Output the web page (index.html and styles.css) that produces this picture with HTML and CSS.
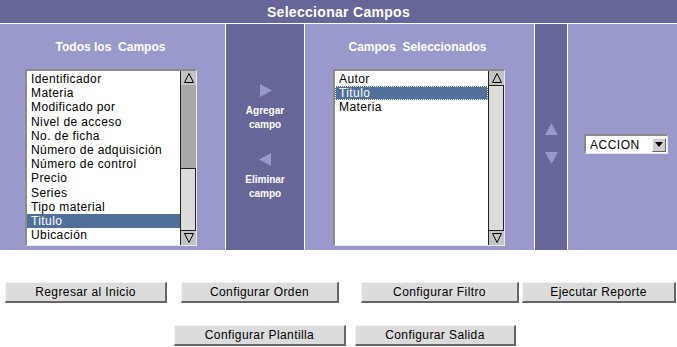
FILE: index.html
```html
<!DOCTYPE html>
<html>
<head>
<meta charset="utf-8">
<link rel="stylesheet" href="styles.css">
</head>
<body>
<div class="panel">
  <div class="title">Seleccionar Campos</div>

  <div class="col light col-all">
    <div class="heading">Todos los&nbsp; Campos</div>
    <div class="listbox lb-left">
      <div class="items">
        <div class="item">Identificador</div>
        <div class="item">Materia</div>
        <div class="item">Modificado por</div>
        <div class="item">Nivel de acceso</div>
        <div class="item">No. de ficha</div>
        <div class="item">Número de adquisición</div>
        <div class="item">Número de control</div>
        <div class="item">Precio</div>
        <div class="item">Series</div>
        <div class="item">Tipo material</div>
        <div class="item sel">Titulo</div>
        <div class="item">Ubicación</div>
      </div>
      <div class="sb">
        <div class="sb-btn"><svg width="12" height="12" viewBox="0 0 12 12"><path d="M1.5 10.5 L6 1.5 L10.5 10.5 Z" fill="none" stroke="#000" stroke-width="1"/></svg></div>
        <div class="sb-track">
          <div class="sb-gap"></div>
          <div class="sb-thumb thumb-left"></div>
        </div>
        <div class="sb-btn"><svg width="12" height="12" viewBox="0 0 12 12"><path d="M1.5 1.5 L6 10.5 L10.5 1.5 Z" fill="none" stroke="#000" stroke-width="1"/></svg></div>
      </div>
    </div>
  </div>

  <div class="col dark col-move">
    <svg class="tri tri-add" width="12" height="13" viewBox="0 0 12 13"><path d="M0 0 L12 6.5 L0 13 Z" fill="#9999cc"/></svg>
    <div class="move-label">Agregar<br>campo</div>
    <svg class="tri tri-del" width="12" height="13" viewBox="0 0 12 13"><path d="M12 0 L0 6.5 L12 13 Z" fill="#9999cc"/></svg>
    <div class="move-label">Eliminar<br>campo</div>
  </div>

  <div class="col light col-sel">
    <div class="heading">Campos&nbsp; Seleccionados</div>
    <div class="listbox lb-right">
      <div class="items">
        <div class="item">Autor</div>
        <div class="item sel focus">Titulo</div>
        <div class="item">Materia</div>
      </div>
      <div class="sb">
        <div class="sb-btn"><svg width="12" height="12" viewBox="0 0 12 12"><path d="M1.5 10.5 L6 1.5 L10.5 10.5 Z" fill="none" stroke="#000" stroke-width="1"/></svg></div>
        <div class="sb-track">
          <div class="sb-thumb thumb-full"></div>
        </div>
        <div class="sb-btn"><svg width="12" height="12" viewBox="0 0 12 12"><path d="M1.5 1.5 L6 10.5 L10.5 1.5 Z" fill="none" stroke="#000" stroke-width="1"/></svg></div>
      </div>
    </div>
  </div>

  <div class="col dark col-order">
    <svg class="tri tri-up" width="13" height="12" viewBox="0 0 13 12"><path d="M0 12 L6.5 0 L13 12 Z" fill="#9999cc"/></svg>
    <svg class="tri tri-down" width="13" height="12" viewBox="0 0 13 12"><path d="M0 0 L6.5 12 L13 0 Z" fill="#9999cc"/></svg>
  </div>

  <div class="col light col-action">
    <div class="dropdown">
      <span class="dd-text">ACCION</span>
      <span class="dd-btn"><svg width="8" height="5" viewBox="0 0 8 5"><path d="M0 0 H8 L4 5 Z" fill="#000"/></svg></span>
    </div>
  </div>
</div>

<div class="btn-row row1">
  <button class="btn b-regresar">Regresar al Inicio</button>
  <button class="btn b-orden">Configurar Orden</button>
  <button class="btn b-filtro">Configurar Filtro</button>
  <button class="btn b-ejecutar">Ejecutar Reporte</button>
</div>
<div class="btn-row row2">
  <button class="btn b-plantilla">Configurar Plantilla</button>
  <button class="btn b-salida">Configurar Salida</button>
</div>
</body>
</html>
```

FILE: styles.css
```css
html, body {
  margin: 0;
  padding: 0;
  background: #ffffff;
  font-family: "Liberation Sans", Arial, Helvetica, sans-serif;
}

.panel {
  display: grid;
  grid-template-columns: 225px 78px 229px 32px 109px;
  grid-template-rows: 23px 226px;
  gap: 1px;
  background: #ffffff;
  width: 677px;
}

.title {
  grid-column: 1 / -1;
  background: #666699;
  color: #ffffff;
  font-weight: bold;
  font-size: 14px;
  letter-spacing: 0.3px;
  display: flex;
  align-items: center;
  justify-content: center;
}

.light { background: #9999cc; }
.dark { background: #666699; }

.col-all, .col-sel {
  display: flex;
  flex-direction: column;
  padding-top: 16px;
  box-sizing: border-box;
}

.heading {
  color: #ffffff;
  font-weight: bold;
  font-size: 12px;
  line-height: 14px;
  height: 14px;
  margin-bottom: 15px;
  text-align: center;
}

.col-all .heading { padding-right: 4px; }
.col-sel .heading { padding-right: 4px; }

.listbox {
  width: 172px;
  height: 177px;
  box-sizing: border-box;
  background: #ffffff;
  border-top: 2px solid #8a8a8a;
  border-left: 2px solid #8a8a8a;
  border-bottom: 1px solid #e8e8e8;
  border-right: 1px solid #e8e8e8;
  display: flex;
}

.lb-left { margin-left: 25px; }
.lb-right { margin-left: 28px; }

.items {
  flex: 1;
  overflow: hidden;
  padding-top: 1px;
}

.item {
  font-size: 12px;
  letter-spacing: 0.4px;
  line-height: 14.2px;
  height: 14.2px;
  padding-left: 4px;
  color: #000000;
  white-space: nowrap;
  box-sizing: border-box;
}

.item.sel {
  background: #50709a;
  color: #ffffff;
}

.item.focus {
  outline: 1px dotted #ffffff;
  outline-offset: -1px;
}

.sb {
  width: 15px;
  display: flex;
  flex-direction: column;
  border-left: 1px solid #222222;
  background: #a8a8a8;
}

.sb-btn {
  height: 14px;
  background: #c4c4c4;
  display: flex;
  align-items: center;
  justify-content: center;
  flex: none;
}

.sb-track {
  flex: 1;
  display: flex;
  flex-direction: column;
}

.sb-gap { flex: 1; }

.sb-thumb {
  background: #dcdcdc;
  border: 1px solid #222222;
  border-left: none;
  box-sizing: border-box;
}

.thumb-left { height: 63px; }
.thumb-full { flex: 1; }

.col-move {
  display: flex;
  flex-direction: column;
  align-items: center;
  padding-top: 60px;
  box-sizing: border-box;
}

.tri { display: block; flex: none; }
.tri-add { margin-left: 1px; margin-bottom: 7px; }
.tri-del { margin-top: 21px; margin-bottom: 7px; margin-left: -1px; }

.move-label {
  color: #ffffff;
  font-weight: bold;
  font-size: 10px;
  line-height: 14px;
  text-align: center;
}

.col-order {
  display: flex;
  flex-direction: column;
  align-items: center;
  padding-top: 99px;
  box-sizing: border-box;
}

.tri-down { margin-top: 17px; }

.col-action {
  padding-top: 110px;
  padding-left: 16px;
  box-sizing: border-box;
}

.dropdown {
  width: 84px;
  height: 20px;
  box-sizing: border-box;
  background: #ffffff;
  border-top: 2px solid #8a8a8a;
  border-left: 2px solid #8a8a8a;
  border-bottom: 1px solid #e8e8e8;
  border-right: 1px solid #e8e8e8;
  display: flex;
  align-items: center;
  justify-content: space-between;
}

.dd-text {
  font-size: 12px;
  letter-spacing: 0.5px;
  padding-left: 4px;
  color: #000000;
}

.dd-btn {
  width: 14px;
  height: 14px;
  margin-right: 1px;
  background: #cfcfcf;
  border-top: 1px solid #f4f4f4;
  border-left: 1px solid #f4f4f4;
  border-bottom: 1px solid #666666;
  border-right: 1px solid #666666;
  box-sizing: border-box;
  display: flex;
  align-items: center;
  justify-content: center;
}

.btn-row {
  display: flex;
}

.row1 { margin-top: 32px; padding-left: 5px; }
.row2 { margin-top: 22px; padding-left: 174px; }

.btn {
  height: 21px;
  box-sizing: border-box;
  margin: 0;
  padding: 0;
  background: #dcdcdc;
  border-top: 1px solid #f2f2f2;
  border-left: 1px solid #f2f2f2;
  border-bottom: 2px solid #666666;
  border-right: 2px solid #666666;
  font-family: "Liberation Sans", Arial, Helvetica, sans-serif;
  font-size: 12px;
  letter-spacing: 0.4px;
  color: #000000;
  text-align: center;
}

.b-regresar { width: 162px; }
.b-orden { width: 158px; margin-left: 14px; }
.b-filtro { width: 158px; margin-left: 22px; }
.b-ejecutar { width: 154px; margin-left: 3px; }
.b-plantilla { width: 172px; }
.b-salida { width: 161px; margin-left: 9px; }
```
